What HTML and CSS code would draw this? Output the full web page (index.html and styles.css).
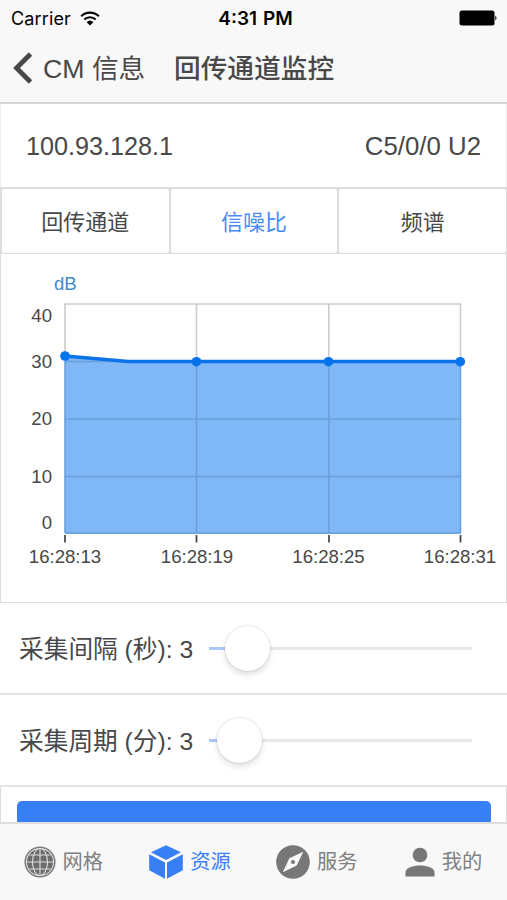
FILE: index.html
```html
<!DOCTYPE html>
<html lang="zh-CN">
<head>
    <meta charset="UTF-8">
    <meta name="viewport" content="width=device-width, initial-scale=1">
    <title>回传通道监控</title>
    <link rel="stylesheet" href="styles.css">
</head>

<body>
<div class="header">
    <div class="status-bar">
        <div class="carrier">
            <span>Carrier</span>
            <svg class="wifi" width="20" height="15" viewBox="0 0 20 15">
                <path d="M1.2 5.2a12.6 12.6 0 0 1 17.6 0M4.3 8.5a8.3 8.3 0 0 1 11.4 0" fill="none" stroke="#000" stroke-width="2.1"/>
                <path d="M6.6 11.2a5 5 0 0 1 6.8 0L10 14.4z"/>
            </svg>
        </div>
        <div class="clock">4:31 PM</div>
        <svg class="battery" width="39" height="16" viewBox="0 0 39 16">
            <rect x="0.5" y="0.5" width="35" height="15" rx="2.5"/>
            <path d="M36.3 5.5q2.4 2.5 0 5z"/>
        </svg>
    </div>
    <div class="nav-bar">
        <svg class="back-icon" width="20" height="32" viewBox="0 0 20 32">
            <path d="M18.5 2L4.5 16L18.5 30" fill="none" stroke="#484848" stroke-width="4.8"/>
        </svg>
        <span class="back-text">CM 信息</span>
        <span class="title">回传通道监控</span>
    </div>
</div>

<div class="content">
    <div class="info">
        <span>100.93.128.1</span>
        <span class="port">C5/0/0 U2</span>
    </div>
    <div class="tabs">
        <div class="tab">回传通道</div>
        <div class="tab active">信噪比</div>
        <div class="tab">频谱</div>
    </div>
    <div class="chart">
        <svg width="505" height="348" viewBox="1 254 505 348">
            <g class="grid">
                <path d="M64 304H461"/>
                <path d="M65 304V361M196.5 304V361M328.8 304V361M460.5 304V361"/>
            </g>
            <path class="area" d="M65 356L128 361.5H461V534H65z"/>
            <g class="grid-inner">
                <path d="M65 361.5H460M65 419H460M65 476.5H460M65 533H460"/>
                <path d="M65 361V533M196.5 361V533M328.8 361V533M460.5 361V533"/>
            </g>
            <path class="series" d="M65 356L128 361.5H460.5"/>
            <g class="dots">
                <circle cx="65" cy="356" r="4.8"/>
                <circle cx="196.5" cy="361.7" r="4.8"/>
                <circle cx="328.5" cy="361.7" r="4.8"/>
                <circle cx="460.3" cy="361.7" r="4.8"/>
            </g>
            <path class="ticks" d="M65 535V542.5M196.5 535V542.5M329 535V542.5M460.5 535V542.5"/>
            <text class="unit" x="54" y="290">dB</text>
            <g class="y-labels">
                <text x="52" y="321.5">40</text>
                <text x="52" y="368">30</text>
                <text x="52" y="425">20</text>
                <text x="52" y="482.5">10</text>
                <text x="52" y="528.5">0</text>
            </g>
            <g class="x-labels">
                <text x="65" y="563">16:28:13</text>
                <text x="197" y="563">16:28:19</text>
                <text x="328.5" y="563">16:28:25</text>
                <text x="460" y="563">16:28:31</text>
            </g>
        </svg>
    </div>
    <div class="range">
        <span class="range-label">采集间隔 (秒): 3</span>
        <div class="track">
            <div class="fill" style="width: 16px"></div>
            <div class="knob"></div>
        </div>
    </div>
    <div class="range">
        <span class="range-label">采集周期 (分): 3</span>
        <div class="track">
            <div class="fill" style="width: 8px"></div>
            <div class="knob"></div>
        </div>
    </div>
    <div class="action">
        <div class="button"></div>
    </div>
</div>

<div class="tab-bar">
    <div class="tab-item">
        <svg width="32" height="32" viewBox="0 0 32 32">
            <circle cx="16" cy="16" r="14.8" fill="#ddd" stroke="#808080" stroke-width="1.6"/>
            <circle cx="16" cy="16" r="13" fill="#6c6c6c"/>
            <g fill="none" stroke="#ddd" stroke-width="1.1">
                <path d="M16 3V29M3 16H29M5.5 9H26.5M5.5 23H26.5"/>
                <ellipse cx="16" cy="16" rx="7.5" ry="13.5"/>
            </g>
        </svg>
        <span>网格</span>
    </div>
    <div class="tab-item active">
        <svg width="34" height="34" viewBox="0 0 34 34" fill="#387ef5">
            <path d="M17 0.3L32 7.3L17 15L2 7.3z"/>
            <path d="M0.2 9.2L16 17.5V33.7L0.2 25.3z"/>
            <path d="M33.8 9.2L18 17.5V33.7L33.8 25.3z"/>
        </svg>
        <span>资源</span>
    </div>
    <div class="tab-item">
        <svg width="34" height="34" viewBox="0 0 34 34">
            <circle cx="17" cy="17" r="16.8" fill="#777"/>
            <path d="M27.3 6.8L20.7 20.6L6.8 27.3L13.3 13.3z" fill="#f8f8f8"/>
            <circle cx="17" cy="17" r="2" fill="#777"/>
        </svg>
        <span>服务</span>
    </div>
    <div class="tab-item">
        <svg width="30" height="30" viewBox="0 0 30 30" fill="#777">
            <circle cx="15" cy="8" r="7.3"/>
            <path d="M0.5 29.5V25.5C0.5 21 8 18.5 15 18.5S29.5 21 29.5 25.5V29.5z"/>
        </svg>
        <span>我的</span>
    </div>
</div>
</body>
</html>
```
FILE: styles.css
```css
* {
    box-sizing: border-box;
}

body {
    background: #fff;
    color: #484848;
    display: flex;
    flex-direction: column;
    font-family: "Liberation Sans", "Noto Sans CJK SC", sans-serif;
    height: 900px;
    margin: 0;
    overflow: hidden;
    width: 507px;
}

svg {
    display: block;
    flex-shrink: 0;
}

.header {
    background: #f8f8f8;
    border-bottom: 2px solid #d5d5d5;
    flex-shrink: 0;
    height: 104px;
}

.status-bar {
    align-items: center;
    color: #000;
    display: grid;
    font-family: Inter, sans-serif;
    font-size: 18px;
    grid-template-columns: 1fr auto 1fr;
    height: 36px;
    padding: 0 9px 0 11px;
}

.carrier {
    align-items: center;
    display: flex;
    gap: 9px;
    letter-spacing: .15px;
}

.clock {
    font-size: 19px;
    font-weight: 600;
    padding-left: 2px;
    word-spacing: 1px;
}

.battery {
    justify-self: end;
}

.nav-bar {
    align-items: center;
    display: flex;
    font-size: 26.7px;
    height: 64px;
    padding-left: 12px;
}

.back-text {
    margin-left: 11px;
    padding-bottom: 4px;
    width: 131px;
}

.title {
    font-weight: 500;
    padding-bottom: 4px;
}

.content {
    display: flex;
    flex: 1;
    flex-direction: column;
    overflow: hidden;
}

.info {
    align-items: center;
    border-left: 1px solid #eee;
    border-right: 1px solid #eee;
    display: flex;
    flex-shrink: 0;
    font-size: 25.2px;
    height: 83px;
    justify-content: space-between;
    padding: 2px 25px 0;
}

.port {
    font-size: 25.8px;
}

.tabs {
    background: #ddd;
    display: flex;
    flex-shrink: 0;
    gap: 2px;
    height: 67px;
    padding: 2px 1px 1px 2px;
}

.tab {
    align-items: center;
    background: #fff;
    border-radius: 2px;
    display: flex;
    flex: 1;
    font-size: 22px;
    justify-content: center;
    padding-bottom: 2px;
}

.tab.active {
    color: #4a8af5;
}

.chart {
    border: solid #ddd;
    border-width: 0 1px 1px;
    flex-shrink: 0;
    height: 349px;
}

.grid {
    fill: none;
    stroke: #ccc;
    stroke-width: 1.6;
}

.grid-inner {
    fill: none;
    stroke: #6aa1dc;
    stroke-width: 1.6;
}

.area {
    fill: #0070f0;
    fill-opacity: .5;
}

.series {
    fill: none;
    stroke: #0b72e7;
    stroke-width: 3.4;
}

.dots {
    fill: #0573ec;
}

.ticks {
    stroke: #444;
    stroke-width: 1.7;
}

.chart text {
    fill: #484848;
    font-size: 18.6px;
}

.chart .unit {
    fill: #428bca;
}

.y-labels {
    text-anchor: end;
}

.x-labels {
    text-anchor: middle;
}

.range {
    align-items: center;
    border-bottom: 2px solid #e3e3e3;
    display: flex;
    flex-shrink: 0;
    height: 92px;
    padding: 0 35px 0 19px;
}

.range-label {
    font-size: 24.7px;
    padding-bottom: 2px;
    width: 190px;
}

.track {
    align-items: center;
    background: linear-gradient(#e8e8e8, #e8e8e8) center / 100% 3px no-repeat;
    display: flex;
    flex: 1;
    height: 48px;
}

.fill {
    background: #a9c8fa;
    height: 3px;
}

.knob {
    background: #fff;
    border-radius: 50%;
    box-shadow: 0 0 2px rgb(0 0 0 / 20%), 0 4px 6px rgb(0 0 0 / 12%);
    height: 45px;
    width: 45px;
}

.action {
    border: 1px solid #ddd;
    border-width: 0 1px;
    flex: 1;
    padding: 14px 15px 0 16px;
}

.button {
    background: #387ef5;
    border-radius: 5px;
    height: 60px;
}

.tab-bar {
    background: #f8f8f8;
    border-top: 2px solid #ddd;
    display: flex;
    flex-shrink: 0;
    height: 78px;
}

.tab-item {
    align-items: center;
    color: #808080;
    display: flex;
    flex: 1;
    font-size: 20.3px;
    gap: 7px;
    justify-content: center;
}

.tab-item span {
    padding-bottom: 4px;
}

.tab-item.active {
    color: #387ef5;
}
```
